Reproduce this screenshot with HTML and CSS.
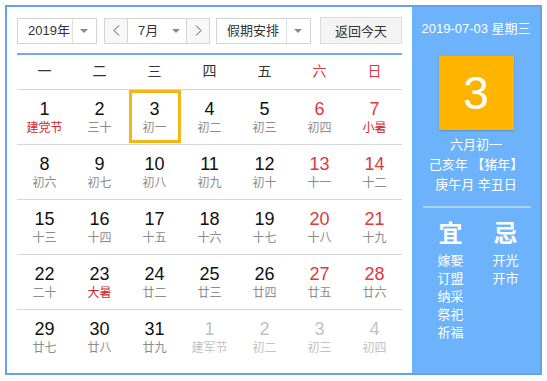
FILE: index.html
```html
<!DOCTYPE html>
<html lang="zh-CN">
<head>
    <meta charset="UTF-8">
    <title>万年历</title>
    <link rel="stylesheet" href="styles.css">
</head>
<body>
    <!-- Calendar Frame -->
    <div class="calendar">
        <div class="main">
            <!-- Toolbar -->
            <div class="toolbar">
                <div class="select year-select">
                    <span class="value">2019年</span>
                    <span class="drop"><i class="caret"></i></span>
                </div>
                <div class="select month-group">
                    <span class="arrow">
                        <svg width="7" height="11" viewBox="0 0 7 11"><polyline points="6,0.5 1,5.5 6,10.5" fill="none" stroke="#555" stroke-width="1"/></svg>
                    </span>
                    <span class="value month-value">7月</span>
                    <span class="drop month-drop"><i class="caret"></i></span>
                    <span class="arrow">
                        <svg width="7" height="11" viewBox="0 0 7 11"><polyline points="1,0.5 6,5.5 1,10.5" fill="none" stroke="#555" stroke-width="1"/></svg>
                    </span>
                </div>
                <div class="select holiday-select">
                    <span class="value">假期安排</span>
                    <span class="drop"><i class="caret"></i></span>
                </div>
                <button class="today-btn">返回今天</button>
            </div>

            <!-- Weekday Header -->
            <div class="weekdays">
                <span>一</span>
                <span>二</span>
                <span>三</span>
                <span>四</span>
                <span>五</span>
                <span class="weekend">六</span>
                <span class="weekend">日</span>
            </div>

            <!-- Days -->
            <div class="week">
                <div class="cell"><div class="day"><b>1</b><small class="festival">建党节</small></div></div>
                <div class="cell"><div class="day"><b>2</b><small>三十</small></div></div>
                <div class="cell"><div class="day selected"><b>3</b><small>初一</small></div></div>
                <div class="cell"><div class="day"><b>4</b><small>初二</small></div></div>
                <div class="cell"><div class="day"><b>5</b><small>初三</small></div></div>
                <div class="cell weekend"><div class="day"><b>6</b><small>初四</small></div></div>
                <div class="cell weekend"><div class="day"><b>7</b><small class="festival">小暑</small></div></div>
            </div>
            <div class="week">
                <div class="cell"><div class="day"><b>8</b><small>初六</small></div></div>
                <div class="cell"><div class="day"><b>9</b><small>初七</small></div></div>
                <div class="cell"><div class="day"><b>10</b><small>初八</small></div></div>
                <div class="cell"><div class="day"><b>11</b><small>初九</small></div></div>
                <div class="cell"><div class="day"><b>12</b><small>初十</small></div></div>
                <div class="cell weekend"><div class="day"><b>13</b><small>十一</small></div></div>
                <div class="cell weekend"><div class="day"><b>14</b><small>十二</small></div></div>
            </div>
            <div class="week">
                <div class="cell"><div class="day"><b>15</b><small>十三</small></div></div>
                <div class="cell"><div class="day"><b>16</b><small>十四</small></div></div>
                <div class="cell"><div class="day"><b>17</b><small>十五</small></div></div>
                <div class="cell"><div class="day"><b>18</b><small>十六</small></div></div>
                <div class="cell"><div class="day"><b>19</b><small>十七</small></div></div>
                <div class="cell weekend"><div class="day"><b>20</b><small>十八</small></div></div>
                <div class="cell weekend"><div class="day"><b>21</b><small>十九</small></div></div>
            </div>
            <div class="week">
                <div class="cell"><div class="day"><b>22</b><small>二十</small></div></div>
                <div class="cell"><div class="day"><b>23</b><small class="festival">大暑</small></div></div>
                <div class="cell"><div class="day"><b>24</b><small>廿二</small></div></div>
                <div class="cell"><div class="day"><b>25</b><small>廿三</small></div></div>
                <div class="cell"><div class="day"><b>26</b><small>廿四</small></div></div>
                <div class="cell weekend"><div class="day"><b>27</b><small>廿五</small></div></div>
                <div class="cell weekend"><div class="day"><b>28</b><small>廿六</small></div></div>
            </div>
            <div class="week">
                <div class="cell"><div class="day"><b>29</b><small>廿七</small></div></div>
                <div class="cell"><div class="day"><b>30</b><small>廿八</small></div></div>
                <div class="cell"><div class="day"><b>31</b><small>廿九</small></div></div>
                <div class="cell other"><div class="day"><b>1</b><small>建军节</small></div></div>
                <div class="cell other"><div class="day"><b>2</b><small>初二</small></div></div>
                <div class="cell other"><div class="day"><b>3</b><small>初三</small></div></div>
                <div class="cell other"><div class="day"><b>4</b><small>初四</small></div></div>
            </div>
        </div>

        <!-- Side Panel -->
        <div class="side">
            <div class="side-date">2019-07-03 星期三</div>
            <div class="big-day">3</div>
            <div class="lunar">
                <p>六月初一</p>
                <p>己亥年 【猪年】</p>
                <p>庚午月 辛丑日</p>
            </div>
            <div class="divider"></div>
            <div class="almanac">
                <div class="almanac-col">
                    <h3>宜</h3>
                    <p>嫁娶</p>
                    <p>订盟</p>
                    <p>纳采</p>
                    <p>祭祀</p>
                    <p>祈福</p>
                </div>
                <div class="almanac-col">
                    <h3>忌</h3>
                    <p>开光</p>
                    <p>开市</p>
                </div>
            </div>
        </div>
    </div>
</body>
</html>
```

FILE: styles.css
```css
/* Basic Styling */
body {
    margin: 0;
    padding: 0;
    background: #fff;
    font-family: "Liberation Sans", "Noto Sans CJK SC", sans-serif;
    color: #333;
}

/* Calendar Frame */
.calendar {
    display: flex;
    width: 537px;
    height: 370px;
    margin: 5px 0 0 5px;
    border: 2px solid #62a3eb;
    box-sizing: border-box;
}

.main {
    width: 405px;
    padding: 10px 10px 0 10px;
    box-sizing: border-box;
}

/* Toolbar */
.toolbar {
    display: flex;
    align-items: center;
    height: 27px;
    font-size: 13px;
}

.select {
    display: flex;
    height: 26px;
    border: 1px solid #d4d4d4;
    box-sizing: border-box;
    background: #fff;
}

.select .value {
    display: flex;
    align-items: center;
    padding: 0 0 0 10px;
    line-height: 24px;
}

.select .drop {
    display: flex;
    align-items: center;
    justify-content: center;
    width: 24px;
    border-left: 1px solid #e0e0e0;
}

.caret {
    width: 0;
    height: 0;
    border-left: 4px solid transparent;
    border-right: 4px solid transparent;
    border-top: 4px solid #8a8a8a;
}

.year-select {
    width: 80px;
}

.year-select .value {
    width: 55px;
    box-sizing: border-box;
}

.month-group {
    width: 106px;
    margin-left: 7px;
}

.month-group .arrow {
    display: flex;
    align-items: center;
    justify-content: center;
    width: 22px;
    background: #f7f7f7;
}

.month-group .arrow:first-child {
    border-right: 1px solid #d4d4d4;
}

.month-group .arrow:last-child {
    border-left: 1px solid #d4d4d4;
}

.month-value {
    width: 38px;
    box-sizing: border-box;
}

.month-drop {
    border-left: none !important;
    width: 20px !important;
}

.holiday-select {
    width: 95px;
    margin-left: 6px;
}

.holiday-select .value {
    width: 70px;
    box-sizing: border-box;
}

.today-btn {
    width: 82px;
    height: 27px;
    margin-left: auto;
    border: 1px solid #dcdcdc;
    background: #f4f4f4;
    color: #333;
    font-family: "Liberation Sans", "Noto Sans CJK SC", sans-serif;
    font-size: 13px;
    padding: 0;
}

/* Weekday Header */
.weekdays {
    display: flex;
    margin-top: 9px;
    border-top: 2px solid #6eaef0;
    height: 34px;
    font-size: 14px;
    color: #333;
}

.weekdays span {
    width: 55px;
    text-align: center;
    line-height: 32px;
}

.weekdays .weekend {
    color: #e0383c;
}

/* Day Rows */
.week {
    display: flex;
    height: 55px;
    border-top: 1px solid #d6d6d6;
    box-sizing: border-box;
}

.cell {
    width: 55px;
    display: flex;
    justify-content: center;
}

.day {
    width: 52px;
    height: 53px;
    border: 3px solid transparent;
    box-sizing: border-box;
    text-align: center;
    padding-top: 6px;
}

.day.selected {
    border-color: #f4b615;
}

.day b {
    display: block;
    font-weight: normal;
    font-size: 18px;
    line-height: 20px;
    color: #111;
}

.day small {
    display: block;
    font-size: 12px;
    line-height: 16px;
    margin-top: 1px;
    color: #8c8c8c;
}

.cell.weekend b {
    color: #e0383c;
}

.day small.festival {
    color: #d0262c;
}

.cell.other b,
.cell.other small {
    color: #c2c2c2;
}

/* Side Panel */
.side {
    flex: 1;
    background: #6db3fb;
    color: #fff;
    text-align: center;
    padding-top: 12px;
}

.side-date {
    font-size: 13px;
    line-height: 20px;
}

.big-day {
    width: 75px;
    height: 74px;
    margin: 17px auto 0;
    background: #ffb400;
    font-size: 46px;
    line-height: 74px;
    box-shadow: 0 1px 2px rgba(0, 0, 0, 0.2);
}

.lunar {
    margin-top: 5px;
    font-size: 13px;
}

.lunar p {
    margin: 0;
    line-height: 20px;
}

.divider {
    height: 2px;
    margin: 11px 9px 0 11px;
    background: #a9d2fd;
}

.almanac {
    display: flex;
    justify-content: center;
    padding-left: 4px;
    margin-top: 11px;
}

.almanac-col {
    width: 55px;
}

.almanac h3 {
    margin: 0 0 3px;
    font-size: 24px;
    font-weight: bold;
    line-height: 30px;
}

.almanac p {
    margin: 0;
    font-size: 13px;
    line-height: 18px;
}
```
